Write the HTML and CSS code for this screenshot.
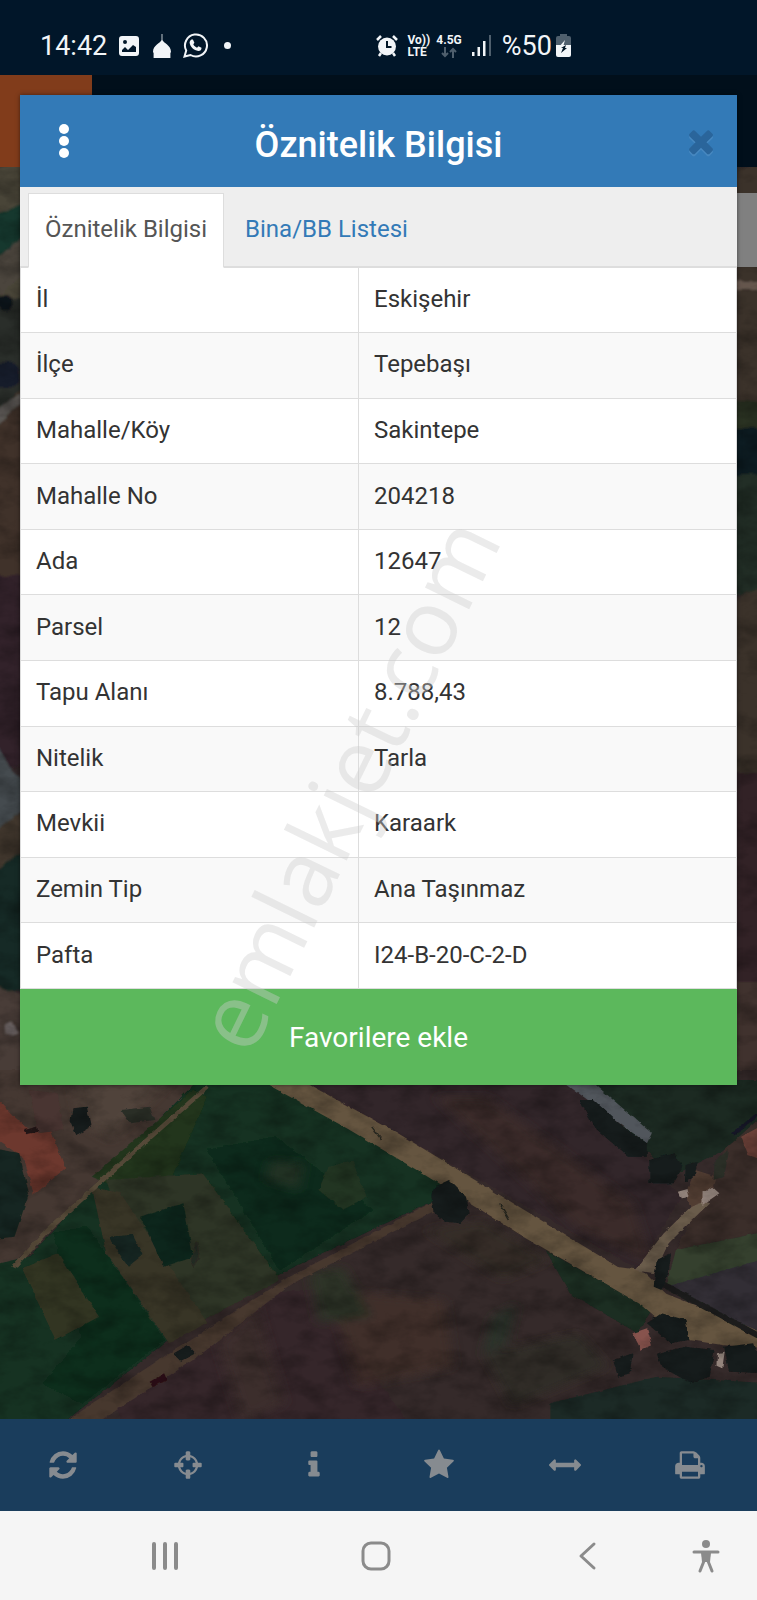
FILE: index.html
```html
<!DOCTYPE html>
<html lang="tr">
<head>
    <meta charset="UTF-8">
    <meta name="viewport" content="width=device-width, initial-scale=1.0">
    <title>Öznitelik Bilgisi</title>
    <link rel="stylesheet" href="styles.css">
</head>
<body>
    <div class="screen">
        <header class="status-bar">
            <div class="status-left">
                <span class="clock">14:42</span>
                <svg width="20" height="20" viewBox="0 0 20 20" fill="#f2f5f8">
                    <path fill-rule="evenodd" d="M3 0h14a3 3 0 0 1 3 3v14a3 3 0 0 1-3 3H3a3 3 0 0 1-3-3V3a3 3 0 0 1 3-3zM3 16h14v-5l-3-2-5 5-3-3-3 3zM6 4a2 2 0 1 0 0 4 2 2 0 0 0 0-4z"/>
                </svg>
                <svg class="mosque" width="18" height="24" viewBox="0 0 18 24" fill="#f2f5f8">
                    <path d="M8.600 0h.8v6c1 3 8.600 5 8.600 12l-.6 1v5H.6v-5L0 18C0 11 7.600 9 8.600 6z"/>
                </svg>
                <svg class="whatsapp" width="25" height="25" viewBox="0 0 25 25" fill="none" stroke="#f2f5f8">
                    <path stroke-width="2" d="M1.500 23.500l1.700-6A11 11 0 1 1 7.500 22z"/>
                    <path fill="#f2f5f8" stroke="none" d="M8.500 6.500h1.400l1.500 3.300-1.100 1.500c.8 1.700 2 2.700 3.700 3.400l1.500-1.500 3 1.500c.3 2-1.400 3.400-3.200 3.300-4.500-.5-8-4.200-8.700-8.200 0-1.300.8-2.700 1.900-3.300z"/>
                </svg>
                <span class="more-dot"></span>
            </div>
            <div class="status-right">
                <svg width="22" height="22" viewBox="0 0 22 22">
                    <path d="M1 5l4-4M21 5l-4-4M5 18l-2 3M17 18l2 3" stroke="#f2f5f8" stroke-width="2.500"/>
                    <circle cx="11" cy="11.500" r="9" fill="#f2f5f8"/>
                    <path d="M11 6v6h4.500" fill="none" stroke="#011526" stroke-width="2"/>
                </svg>
                <span class="volte">Vo))<br>LTE</span>
                <span class="network">4.5G
                    <svg width="16" height="11" viewBox="0 0 16 11" fill="none" stroke="#4f5f6d" stroke-width="2">
                        <path d="M4 0v9M1 6l3 3 3-3M12 11V2M9 5l3-3 3 3"/>
                    </svg>
                </span>
                <svg width="20" height="21" viewBox="0 0 20 21" fill="#f2f5f8">
                    <path d="M0 17h2.500v4H0zM5.500 12H8v9H5.500zM11 6h2.500v15H11z"/>
                    <path d="M17 0h2v21h-2z" fill="#4f5f6d"/>
                </svg>
                <span class="battery">%50
                    <svg width="15" height="23" viewBox="0 0 15 23">
                        <path d="M4 0h7v2h2q2 0 2 2v8H0V4q0-2 2-2h2z" fill="#4f5f6d"/>
                        <path d="M0 11h15v10q0 2-2 2H2q-2 0-2-2z" fill="#f2f5f8"/>
                        <path d="M9 6l-6 7h4" fill="#f2f5f8"/>
                        <path d="M5 19l2-5H5l5-3-1 3h2z" fill="#011526"/>
                    </svg>
                </span>
            </div>
        </header>

        <main class="map-view">
            <svg class="map" viewBox="0 0 757 1344" preserveAspectRatio="xMidYMax slice" aria-hidden="true">
                <defs>
                    <filter id="soft" x="-5%" y="-5%" width="110%" height="110%">
                        <feTurbulence type="fractalNoise" baseFrequency="0.05" numOctaves="3" seed="8" result="n"/>
                        <feDisplacementMap in="SourceGraphic" in2="n" scale="9" xChannelSelector="R" yChannelSelector="G"/>
                        <feGaussianBlur stdDeviation="1.300"/>
                    </filter>
                    <filter id="haze" x="-30%" y="-30%" width="160%" height="160%">
                        <feGaussianBlur stdDeviation="12"/>
                    </filter>
                    <filter id="ground" x="0" y="0" width="100%" height="100%">
                        <feTurbulence type="fractalNoise" baseFrequency="0.03 0.05" numOctaves="5" seed="5"/>
                        <feColorMatrix values="0 0 0 0 0  0 0 0 0 0  0 0 0 0 0  1.200 0 0 0 -0.480"/>
                    </filter>
                </defs>
                <rect width="757" height="1344" fill="#33282a"/>

                <!-- left edge -->
                <g filter="url(#soft)">
                    <path d="M-10 92h34v130h-34z" fill="#4a4438"/>
                    <path d="M-10 142l34-16v36l-34 26z" fill="#17382f"/>
                    <path d="M-10 190l34-30v40l-34 26z" fill="#4c443e"/>
                    <path d="M-10 222h34v110h-34z" fill="#2b2f2a"/>
                    <circle cx="4" cy="228" r="8" fill="#11151a"/>
                    <circle cx="6" cy="300" r="13" fill="#171a2c"/>
                    <path d="M-10 350l34-40v190h-34z" fill="#3f322b"/>
                    <path d="M-10 340l34-24v12l-34 26z" fill="#5a5752"/>
                    <path d="M-10 500h34v190h-34z" fill="#30242a"/>
                    <path d="M-10 660l34 50v26l-34 26z" fill="#444c4f"/>
                    <path d="M-10 762l34-28v90h-34z" fill="#42392f"/>
                    <path d="M-10 800l34-24v140h-34z" fill="#182c25"/>
                    <path d="M-10 908l34 12v90h-34z" fill="#4a3e38"/>
                    <path d="M4 950l10-4 5 12-11 4z" fill="#79706f"/>
                </g>

                <!-- right edge -->
                <g filter="url(#soft)">
                    <path d="M733 92h34v110h-34z" fill="#3b302b"/>
                    <path d="M733 192h34v150h-34z" fill="#3a302c"/>
                    <path d="M733 206h34v8h-34z" fill="#65564e"/>
                    <path d="M733 325h34v40h-34z" fill="#2a3024"/>
                    <path d="M733 355h34v50h-34z" fill="#111d22"/>
                    <path d="M733 400h34v120h-34z" fill="#212e25"/>
                    <path d="M733 524l34-14v190h-34z" fill="#3a302a"/>
                    <path d="M733 698h34v210h-34z" fill="#302326"/>
                    <path d="M733 908h34v100h-34z" fill="#40312f"/>
                </g>

                <!-- fields below the dialog -->
                <g transform="translate(0 995) scale(.4828 .3333)">
                    <g filter="url(#soft)">
                        <path d="M-30 0h1630V1120H-30z" fill="#35292a"/>
                        <path d="M-30 0h470L20 590l-50 10z" fill="#443933"/>
                        <path d="M410 30h150l360 300-20 60L575 615 340 820 130 1060H-30V590l90-30 140-220z" fill="#123020"/>
                        <path d="M400 60l30 20-80 260 70 30-130 10-100-60z" fill="#24351f"/>
                        <path d="M220 330l200-20 160 320-210 160-60-40z" fill="#2d3525"/>
                        <path d="M190 350l60 20 180 390-80 60-130-270z" fill="#383427"/>
                        <path d="M290 440l90-40 20 160-60 30z" fill="#10271e"/>
                        <path d="M225 500l50-5 20 60-30 35z" fill="#132720"/>
                        <path d="M110 490l70-20 160 340-170 190-80-60 80-140z" fill="#112e1d"/>
                        <path d="M45 595l75-45 85 190-90 70z" fill="#313524"/>
                        <path d="M430 240l140-40 200 220-190 180z" fill="#102a1c"/>
                        <path d="M680 290l50-20 30 110-50 40-50-60z" fill="#213421"/>
                        <path d="M630 30h560l220 350-90 215z" fill="#33272a"/>
                        <path d="M1200 30h400v90l-100 120-110 80z" fill="#1c2c21"/>
                        <path d="M1600 110l-100 130-100 300 200-60z" fill="#3a2e2c"/>
                        <path d="M1400 540l200-60v100l-220 70z" fill="#34402f"/>
                        <path d="M1380 650l220-90v250z" fill="#302e35"/>
                        <path d="M1130 540l220 180-30 70-140-120z" fill="#1d2d22"/>
                        <path d="M250 1060l-10-50 320-340 90-10 200 410z" fill="#35272a"/>
                        <path d="M1140 1000l220-80 240 20v140h-460z" fill="#1d2b27"/>
                    </g>
                    <g filter="url(#haze)" opacity=".7">
                        <path d="M560 270l70 10-10 80-70-30z" fill="#2c3528"/>
                        <path d="M900 80l300 400 150 100-40-180-300-320z" fill="#412e2a"/>
                        <path d="M680 660l240 30 20 200-200 60z" fill="#45332b"/>
                        <path d="M640 610l70-20 60 150-110 20z" fill="#2b3726"/>
                        <path d="M1020 740l50-40-20 120-50 40z" fill="#26382a"/>
                        <path d="M880 480l120-30 140 120-100 60z" fill="#352f28"/>
                        <path d="M150 30h200l-120 180-60-50z" fill="#574840"/>
                        <path d="M1000 850l200-60 60 100-200 120z" fill="#2f2f27"/>
                        <path d="M450 820l80-120 60 300-90 60z" fill="#40302d"/>
                    </g>
                    <g filter="url(#soft)">
                        <!-- roads -->
                        <path d="M545 36h85l190 150 250 220 210 185 50 10 50 70 130 75 100 60v30l-110-10-90-20-80-100-250-210-210-190-150-130z" fill="#65543f"/>
                        <path d="M1315 600l60-110 70-100 24 10-84 120-30 90z" fill="#6b5b4c"/>
                        <path d="M895 395L600 620 350 850 130 1060h70L410 860l190-215 310-230z" fill="#46372f"/>
                        <path d="M30 590l70-110 150-200L430 50" fill="none" stroke="#554a39" stroke-width="11"/>
                        <path d="M1170 40h60l120 150-10 30z" fill="#51565c"/>
                        <path d="M1370 640l230 180" stroke="#1c1e1c" stroke-width="16"/>
                        <!-- roofs -->
                        <path d="M-30 50l60 90 30 40 40-20 35 135-65 80-20-110-80-80z" fill="#6d382e"/>
                        <path d="M50 180l40-15-10 20-25 8z" fill="#241418"/>
                        <path d="M-30 230l70 20 20 120-30 130-60 10z" fill="#182720"/>
                        <path d="M60 60l60 10 10 110-50 10z" fill="#483430"/>
                        <path d="M1420 370l20-70 45 20-15 70-40 20z" fill="#513c33"/>
                        <path d="M1404 365l20-8 4 24-18 4zM1455 370l20-20 15 20-35 35zM1485 850l16-5-5 50-12-8z" fill="#93847c"/>
                        <path d="M1310 790l30-15 10 50-22 14z" fill="#87534e"/>
                        <path d="M1535 200l65-50v130l-50-25z" fill="#6a4038"/>
                        <path d="M1518 195l50-60" stroke="#151725" stroke-width="10"/>
                        <!-- trees -->
                        <g fill="#141b1b">
                            <path d="M900 350l30-20 35 50 8 50-20 30-30-5-25-30-5-50z"/>
                            <path d="M1200 90l30 0 60 80 50 50 0 40-40 0-70-90z"/>
                            <path d="M1345 270l50-20 20 40-20 50-50 0z"/>
                            <path d="M150 115l30-5 8 60-30 25-12-40z"/>
                            <path d="M1340 760l30-30 50 20 8 60-40 10zM1270 870l40-20-5 60-25 10zM1360 850l60-20 60 10-10 80-40 20-60-50zM1500 830l60-10 20 90-70-5z"/>
                            <path d="M1360 570l30-20-5 60-15 50-16-10zM360 850l30-25 15 25-30 22zM1420 285l25-10-6 40-20 20z"/>
                        </g>
                        <path d="M250 120l60-10 10 40-50 10zM1480 270l30-30-10 80-22 10z" fill="#2b2d28"/>
                        <path d="M310 935l30-25 6 20-30 22z" fill="#2b1015"/>
                        <path d="M395 575l12-60 6 50-12 25zM770 170l20 40M1035 400l20 50" stroke="#2a2a22" stroke-width="3" fill="#202c22"/>
                    </g>
                </g>
                <rect width="757" height="1344" filter="url(#ground)" opacity=".5"/>
            </svg>

            <div class="app-bar"><span class="app-logo"></span></div>
            <div class="map-panel"></div>

            <section class="dialog" role="dialog" aria-labelledby="dialog-title">
                <div class="dialog-header">
                    <button class="menu-button" type="button" aria-label="Menü">
                        <span></span><span></span><span></span>
                    </button>
                    <h1 id="dialog-title">Öznitelik Bilgisi</h1>
                    <button class="close-button" type="button" aria-label="Kapat">
                        <svg width="36" height="36" viewBox="0 0 1792 1792" fill="currentColor"><path d="M1490 1322q0 40-28 68l-136 136q-28 28-68 28t-68-28l-294-294-294 294q-28 28-68 28t-68-28l-136-136q-28-28-28-68t28-68l294-294-294-294q-28-28-28-68t28-68l136-136q28-28 68-28t68 28l294 294 294-294q28-28 68-28t68 28l136 136q28 28 28 68t-28 68l-294 294 294 294q28 28 28 68z"/></svg>
                    </button>
                </div>

                <nav class="tabs">
                    <a class="tab active" href="#oznitelik">Öznitelik Bilgisi</a>
                    <a class="tab" href="#bina">Bina/BB Listesi</a>
                </nav>

                <table class="info-table" id="oznitelik">
                    <tbody>
                        <tr><th scope="row">İl</th><td>Eskişehir</td></tr>
                        <tr><th scope="row">İlçe</th><td>Tepebaşı</td></tr>
                        <tr><th scope="row">Mahalle/Köy</th><td>Sakintepe</td></tr>
                        <tr><th scope="row">Mahalle No</th><td>204218</td></tr>
                        <tr><th scope="row">Ada</th><td>12647</td></tr>
                        <tr><th scope="row">Parsel</th><td>12</td></tr>
                        <tr><th scope="row">Tapu Alanı</th><td>8.788,43</td></tr>
                        <tr><th scope="row">Nitelik</th><td>Tarla</td></tr>
                        <tr><th scope="row">Mevkii</th><td>Karaark</td></tr>
                        <tr><th scope="row">Zemin Tip</th><td>Ana Taşınmaz</td></tr>
                        <tr><th scope="row">Pafta</th><td>I24-B-20-C-2-D</td></tr>
                    </tbody>
                </table>

                <button class="favorite-button" type="button">Favorilere ekle</button>
                <span class="watermark">emlakjet.com</span>
            </section>
        </main>

        <div class="toolbar">
            <button type="button" aria-label="Yenile">
                <svg viewBox="0 0 1792 1792"><path d="M1639 1056q0 5-1 7-64 268-268 434.500t-478 166.500q-146 0-282.500-55t-243.500-157l-129 129q-19 19-45 19t-45-19-19-45v-448q0-26 19-45t45-19h448q26 0 45 19t19 45-19 45l-137 137q71 66 161 102t187 36q134 0 250-65t186-179q11-17 53-117 8-23 30-23h192q13 0 22.500 9.500t9.500 22.500zm25-800v448q0 26-19 45t-45 19h-448q-26 0-45-19t-19-45 19-45l138-138q-148-137-349-137-134 0-250 65t-186 179q-11 17-53 117-8 23-30 23h-199q-13 0-22.500-9.500t-9.500-22.500v-7q65-268 270-434.500t480-166.500q146 0 284 55.500t245 156.500l130-129q19-19 45-19t45 19 19 45z"/></svg>
            </button>
            <button type="button" aria-label="Konum">
                <svg viewBox="0 0 1792 1792"><path d="M1325 1024h-109q-26 0-45-19t-19-45v-128q0-26 19-45t45-19h109q-32-108-112.500-188.500t-188.500-112.500v109q0 26-19 45t-45 19h-128q-26 0-45-19t-19-45v-109q-108 32-188.500 112.500t-112.500 188.500h109q26 0 45 19t19 45v128q0 26-19 45t-45 19h-109q32 108 112.500 188.500t188.500 112.500v-109q0-26 19-45t45-19h128q26 0 45 19t19 45v109q108-32 188.500-112.500t112.500-188.500zm339-192v128q0 26-19 45t-45 19h-143q-37 161-154.500 278.500t-278.500 154.500v143q0 26-19 45t-45 19h-128q-26 0-45-19t-19-45v-143q-161-37-278.500-154.500t-154.500-278.500h-143q-26 0-45-19t-19-45v-128q0-26 19-45t45-19h143q37-161 154.500-278.500t278.500-154.500v-143q0-26 19-45t45-19h128q26 0 45 19t19 45v143q161 37 278.500 154.500t154.500 278.500h143q26 0 45 19t19 45z"/></svg>
            </button>
            <button type="button" aria-label="Bilgi">
                <svg viewBox="0 0 1792 1792"><path d="M1216 1344v128q0 26-19 45t-45 19h-512q-26 0-45-19t-19-45v-128q0-26 19-45t45-19h64v-384h-64q-26 0-45-19t-19-45v-128q0-26 19-45t45-19h384q26 0 45 19t19 45v576h64q26 0 45 19t19 45zm-128-1152v192q0 26-19 45t-45 19h-256q-26 0-45-19t-19-45v-192q0-26 19-45t45-19h256q26 0 45 19t19 45z"/></svg>
            </button>
            <button type="button" aria-label="Favoriler">
                <svg viewBox="0 0 1792 1792"><path d="M1728 647q0 22-26 48l-363 354 86 500q1 7 1 20 0 21-10.500 35.500t-30.500 14.500q-19 0-40-12l-449-236-449 236q-22 12-40 12-21 0-31.500-14.500t-10.500-35.500q0-6 2-20l86-500-364-354q-25-27-25-48 0-37 56-46l502-73 225-455q19-41 49-41t49 41l225 455 502 73q56 9 56 46z"/></svg>
            </button>
            <button type="button" aria-label="Ölçüm">
                <svg viewBox="0 0 1792 1792"><path d="M1792 896q0 26-19 45l-256 256q-19 19-45 19t-45-19-19-45v-128h-1024v128q0 26-19 45t-45 19-45-19l-256-256q-19-19-19-45t19-45l256-256q19-19 45-19t45 19 19 45v128h1024v-128q0-26 19-45t45-19 45 19l256 256q19 19 19 45z"/></svg>
            </button>
            <button type="button" aria-label="Yazdır">
                <svg viewBox="0 0 1792 1792"><path d="M448 1536h896v-256h-896v256zm0-640h896v-384h-160q-40 0-68-28t-28-68v-160h-640v640zm1152 64q0-26-19-45t-45-19-45 19-19 45 19 45 45 19 45-19 19-45zm128 0v416q0 13-9.500 22.500t-22.500 9.500h-224v160q0 40-28 68t-68 28h-960q-40 0-68-28t-28-68v-160h-224q-13 0-22.500-9.500t-9.500-22.500v-416q0-79 56.500-135.500t135.500-56.500h64v-544q0-40 28-68t68-28h672q40 0 88 20t76 48l152 152q28 28 48 76t20 88v256h64q79 0 135.500 56.500t56.500 135.500z"/></svg>
            </button>
        </div>

        <footer class="system-nav">
            <button type="button" aria-label="Son uygulamalar">
                <svg width="28" height="32" viewBox="0 0 28 32" stroke-width="4"><path d="M3 4v24M14 4v24M25 4v24"/></svg>
            </button>
            <button type="button" aria-label="Ana ekran">
                <svg width="32" height="32" viewBox="0 0 32 32" stroke-width="3"><rect x="3" y="3" width="26" height="26" rx="8"/></svg>
            </button>
            <button type="button" aria-label="Geri">
                <svg width="20" height="32" viewBox="0 0 20 32" stroke-width="3"><path d="M17 4L4 16l13 12"/></svg>
            </button>
            <button type="button" aria-label="Erişilebilirlik">
                <svg width="28" height="34" viewBox="0 0 28 34" stroke-width="3">
                    <circle cx="14" cy="5" r="4" fill="#8b8b8b" stroke="none"/>
                    <path d="M2 13h24M11 14l1 8-4 10M17 14l-1 8 4 10"/>
                    <path d="M9 13h10l-1 10h-8z" fill="#8b8b8b" stroke="none"/>
                </svg>
            </button>
        </footer>
    </div>
</body>
</html>
```
FILE: styles.css
```css
* {
    margin: 0;
    padding: 0;
    box-sizing: border-box;
}

body {
    font-family: Roboto, 'Noto Sans', sans-serif;
    color: #333333;
    background: #011526;
}

button {
    border: none;
    background: none;
    font-family: inherit;
    cursor: pointer;
}

svg {
    display: block;
}

.screen {
    min-height: 100vh;
    display: flex;
    flex-direction: column;
    overflow: hidden;
}

/* Status bar */
.status-bar {
    height: 75px;
    padding: 16px 46px 0 40px;
    display: flex;
    align-items: center;
    background: #011629;
    color: #f2f5f8;
}

.status-left,
.status-right {
    flex: 1;
    display: flex;
    align-items: center;
    gap: 12px;
}

.status-right {
    gap: 10px;
}

.clock,
.battery {
    font-size: 27px;
    line-height: 32px;
}

.mosque {
    margin-left: 2px;
}

.more-dot {
    width: 7px;
    height: 7px;
    margin-left: 4px;
    border-radius: 50%;
    background: #f2f5f8;
}

.volte,
.network {
    font-size: 12px;
    line-height: 12px;
    font-weight: 700;
}

.network {
    display: flex;
    flex-direction: column;
    align-items: center;
    gap: 1px;
    margin-left: -4px;
}

.battery {
    display: flex;
    align-items: center;
    gap: 4px;
}

/* Map */
.map-view {
    position: relative;
    flex: 1;
    padding: 20px 20px 24px;
}

.map {
    position: absolute;
    inset: 0;
    width: 100%;
    height: 100%;
}

.app-bar {
    position: absolute;
    top: 0;
    left: 0;
    right: 0;
    height: 92px;
    background: #010f1b;
}

.app-logo {
    display: block;
    width: 92px;
    height: 100%;
    background: #813c1b;
}

.map-panel {
    position: absolute;
    top: 118px;
    right: 0;
    width: 40px;
    height: 74px;
    background: #808080;
}

/* Dialog */
.dialog {
    position: relative;
    background: #ffffff;
    box-shadow: 0 0 4px rgba(0, 0, 0, 0.5);
}

.dialog-header {
    height: 92px;
    padding: 0 18px;
    display: flex;
    align-items: center;
    background: #337ab7;
    color: #ffffff;
}

.dialog-header h1 {
    flex: 1;
    padding: 8px 16px 0 0;
    font-size: 36px;
    line-height: 44px;
    font-weight: 500;
    text-align: center;
}

.menu-button {
    width: 52px;
    height: 52px;
    display: flex;
    flex-direction: column;
    align-items: center;
    justify-content: center;
    gap: 2px;
}

.menu-button span {
    width: 10px;
    height: 10px;
    border-radius: 50%;
    background: #ffffff;
}

.close-button {
    width: 36px;
    height: 36px;
    color: #2a659b;
    filter: drop-shadow(0 2px 0 #4788c0);
}

.tabs {
    height: 81px;
    padding: 6px 8px 0;
    display: flex;
    background: #eeeeee;
    border-bottom: 2px solid #dddddd;
}

.tab {
    height: 75px;
    padding: 0 16px;
    margin-right: 4px;
    font-size: 24px;
    line-height: 70px;
    border: 1px solid transparent;
    color: #337ab7;
    text-decoration: none;
    white-space: nowrap;
}

.tab.active {
    color: #555555;
    background: #ffffff;
    border-color: #dddddd;
    border-bottom-color: #ffffff;
}

.info-table {
    width: 100%;
    height: 721px;
    border-collapse: collapse;
    font-size: 24px;
    line-height: 32px;
}

.info-table th,
.info-table td {
    padding: 0 15px 2px;
    border: 1px solid #dddddd;
    font-weight: 400;
    text-align: left;
}

.info-table th {
    width: 338px;
}

.info-table tr:nth-child(even) {
    background: #f9f9f9;
}

.info-table tr:first-child > * {
    border-top: none;
}

.favorite-button {
    display: block;
    width: 100%;
    height: 96px;
    background: #5cb85c;
    color: #ffffff;
    font-size: 28px;
}

.watermark {
    position: absolute;
    left: 325px;
    top: 688px;
    transform: translate(-50%, -50%) rotate(-64deg);
    font-family: 'Open Sans', sans-serif;
    font-size: 92px;
    color: rgba(205, 205, 205, 0.4);
    pointer-events: none;
}

/* Bottom toolbar */
.toolbar {
    position: relative;
    height: 92px;
    padding-right: 4px;
    display: grid;
    grid-template-columns: repeat(6, 1fr);
    background: #1a3d5c;
}

.toolbar button {
    display: flex;
    align-items: center;
    justify-content: center;
}

.toolbar svg {
    width: 32px;
    height: 32px;
    fill: #868b90;
}

.system-nav {
    position: relative;
    height: 89px;
    display: grid;
    grid-template-columns: 26fr 26fr 26fr 8fr;
    padding-left: 59px;
    background: #f5f5f5;
}

.system-nav button {
    display: flex;
    align-items: center;
    justify-content: center;
}

.system-nav button:last-child {
    justify-content: flex-start;
}

.system-nav svg {
    fill: none;
    stroke: #8b8b8b;
    stroke-linecap: round;
    stroke-linejoin: round;
}
```
